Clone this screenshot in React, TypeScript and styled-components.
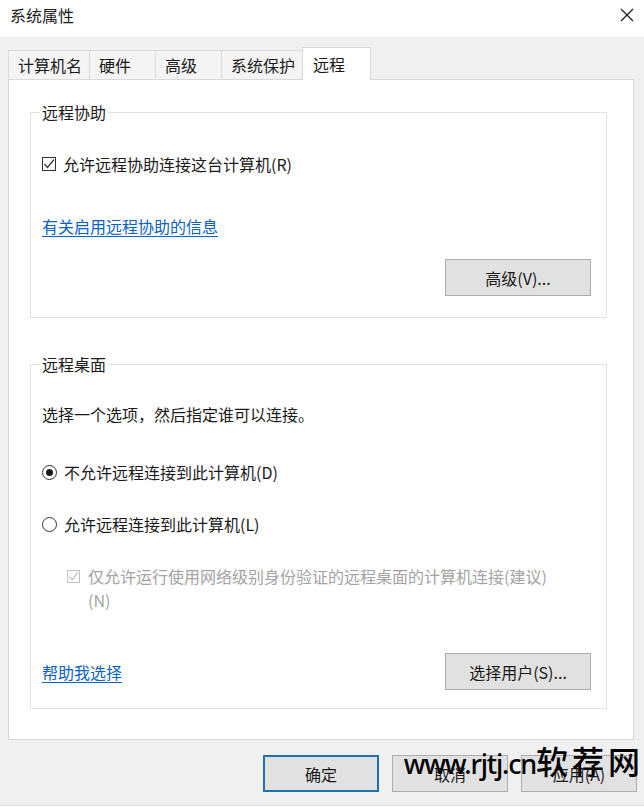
import * as React from 'react'
import styled, { createGlobalStyle } from 'styled-components'

type TabProps = { $active?: boolean }
type RowProps = { $mt: number; $indent?: number }
type ButtonProps = { $width: number; $isDefault?: boolean }

const GlobalStyle = createGlobalStyle`
    html, body {
        margin: 0;
        padding: 0;
        background: #fff;
    }
    body {
        font-family: "Noto Sans CJK SC", "Noto Sans", sans-serif;
    }
`

const Window = styled.div`
    position: relative;
    width: 644px;
    height: 806px;
    box-sizing: border-box;
    background: #f0f0f0;
    border-bottom: 1px solid #dcdcdc;
    color: #1a1a1a;
    font-size: 16px;
    line-height: 24px;
    display: flex;
    flex-direction: column;
    overflow: hidden;
`
const TitleBar = styled.header`
    height: 37px;
    flex-shrink: 0;
    box-sizing: border-box;
    padding: 0 10px 8px 10px;
    background: #fff;
    display: flex;
    align-items: center;
    justify-content: space-between;
`
const Title = styled.h1`
    margin: 0;
    font-size: 16px;
    font-weight: 400;
    line-height: 24px;
`
const CloseButton = styled.span`
    display: flex;
    width: 14px;
    height: 14px;
    margin-top: 1px;
`
const Body = styled.main`
    padding: 11px 10px 0 8px;
`
const TabStrip = styled.nav`
    position: relative;
    z-index: 1;
    display: flex;
    align-items: flex-end;
    height: 32px;
    margin-bottom: -1px;
`
const Tab = styled.div<TabProps>`
    box-sizing: border-box;
    min-width: ${p => (p.$active ? 69 : 67)}px;
    height: ${p => (p.$active ? 33 : 30)}px;
    padding: ${p => (p.$active ? '2px 10px 0' : '0 7px 0 9px')};
    margin-left: -1px;
    border: 1px solid #d9d9d9;
    border-bottom: ${p => (p.$active ? 'none' : '1px solid #d9d9d9')};
    background: ${p => (p.$active ? '#fff' : '#f4f4f4')};
    line-height: 28px;
    white-space: nowrap;

    &:first-child {
        margin-left: 0;
    }
`
const Panel = styled.section`
    background: #fff;
    border: 1px solid #d9d9d9;
    padding: 20px 26px 30px 21px;
`
const GroupBox = styled.fieldset<{ $mt?: number }>`
    margin: ${p => p.$mt ?? 0}px 0 0 0;
    padding: 0 15px 0 11px;
    border: 1px solid #e2e2e2;
    min-width: 0;
`
const Legend = styled.legend`
    padding: 0 2px;
    margin-left: -2px;
    font-size: 16px;
    line-height: 24px;
`
const GroupContent = styled.div<{ $pb: number }>`
    display: flex;
    flex-direction: column;
    align-items: flex-start;
    padding-bottom: ${p => p.$pb}px;
`
const Row = styled.div<RowProps>`
    display: flex;
    align-items: center;
    gap: 7px;
    margin-top: ${p => p.$mt}px;
    padding-left: ${p => p.$indent ?? 0}px;
`
const DisabledRow = styled(Row)`
    align-items: flex-start;
    color: #a3a3a3;
    gap: 8px;
`
const Text = styled.p<{ $mt: number }>`
    margin: ${p => p.$mt}px 0 0 0;
`
const CheckBox = styled.span<{ $disabled?: boolean }>`
    display: flex;
    flex-shrink: 0;
    box-sizing: border-box;
    width: ${p => (p.$disabled ? 13 : 14)}px;
    height: ${p => (p.$disabled ? 13 : 14)}px;
    margin-top: ${p => (p.$disabled ? 6 : 0)}px;
    border: 1px solid ${p => (p.$disabled ? '#c2c2c2' : '#333')};
    background: #fff;
`
const Radio = styled.span<{ $checked?: boolean }>`
    display: flex;
    align-items: center;
    justify-content: center;
    flex-shrink: 0;
    box-sizing: border-box;
    width: 15px;
    height: 15px;
    border: 1px solid #333;
    border-radius: 50%;
    background: #fff;

    &::after {
        content: '';
        display: ${p => (p.$checked ? 'block' : 'none')};
        width: 7px;
        height: 7px;
        border-radius: 50%;
        background: #1a1a1a;
    }
`
const Link = styled.a<{ $mt?: number }>`
    margin-top: ${p => p.$mt ?? 0}px;
    color: #0a62c4;
    text-decoration: underline;
    text-underline-offset: 3px;
    cursor: pointer;
`
const ActionRow = styled.div<{ $mt: number; $justify?: string }>`
    align-self: stretch;
    display: flex;
    align-items: center;
    justify-content: ${p => p.$justify ?? 'space-between'};
    margin-top: ${p => p.$mt}px;
`
const PushButton = styled.button<ButtonProps>`
    box-sizing: border-box;
    width: ${p => p.$width}px;
    height: 37px;
    padding: 0;
    border: ${p => (p.$isDefault ? '2px solid #1f73ad' : '1px solid #adadad')};
    background: #e1e1e1;
    color: #1a1a1a;
    font: inherit;
    line-height: 24px;
`
const Footer = styled.footer`
    position: relative;
    display: flex;
    justify-content: flex-end;
    gap: 13px;
    margin-top: 15px;
    padding-right: 7px;
`
const Watermark = styled.div`
    position: absolute;
    right: 0;
    top: -7px;
    display: flex;
    align-items: baseline;
    color: #000;
    white-space: nowrap;
    pointer-events: none;
`
const WatermarkLatin = styled.span`
    font-family: "Noto Sans", sans-serif;
    font-size: 27px;
    font-weight: 500;
    letter-spacing: -1.2px;
`
const WatermarkCjk = styled.span`
    font-family: "Noto Sans CJK SC", sans-serif;
    font-size: 32px;
    font-weight: 500;
    letter-spacing: 4px;
`

const CheckMark = ({ color }: { color: string }) => (
    <svg width="100%" height="100%" viewBox="0 0 12 12">
        <path d="M1.5 6 L4.5 9.5 L11 1.5" fill="none" stroke={color} strokeWidth="1.2" />
    </svg>
)

const CloseIcon = () => (
    <svg width="14" height="14" viewBox="0 0 14 14">
        <path d="M1 1 L13 13 M13 1 L1 13" stroke="#222" strokeWidth="1.3" fill="none" />
    </svg>
)

const tabs = ['计算机名', '硬件', '高级', '系统保护', '远程']

const App = () => (
    <>
        <GlobalStyle />
        <Window>
            <TitleBar>
                <Title>系统属性</Title>
                <CloseButton>
                    <CloseIcon />
                </CloseButton>
            </TitleBar>
            <Body>
                <TabStrip>
                    {tabs.map(t => (
                        <Tab key={t} $active={t === '远程'}>
                            {t}
                        </Tab>
                    ))}
                </TabStrip>
                <Panel>
                    <GroupBox>
                        <Legend>远程协助</Legend>
                        <GroupContent $pb={21}>
                            <Row $mt={28}>
                                <CheckBox>
                                    <CheckMark color="#333" />
                                </CheckBox>
                                允许远程协助连接这台计算机(R)
                            </Row>
                            <Link $mt={38}>有关启用远程协助的信息</Link>
                            <ActionRow $mt={21} $justify="flex-end">
                                <PushButton $width={146}>高级(V)...</PushButton>
                            </ActionRow>
                        </GroupContent>
                    </GroupBox>
                    <GroupBox $mt={34}>
                        <Legend>远程桌面</Legend>
                        <GroupContent $pb={18}>
                            <Text $mt={26}>选择一个选项，然后指定谁可以连接。</Text>
                            <Row $mt={34}>
                                <Radio $checked />
                                不允许远程连接到此计算机(D)
                            </Row>
                            <Row $mt={28}>
                                <Radio />
                                允许远程连接到此计算机(L)
                            </Row>
                            <DisabledRow $mt={28} $indent={25}>
                                <CheckBox $disabled>
                                    <CheckMark color="#b5b5b5" />
                                </CheckBox>
                                <span>
                                    仅允许运行使用网络级别身份验证的远程桌面的计算机连接(建议)
                                    <br />
                                    (N)
                                </span>
                            </DisabledRow>
                            <ActionRow $mt={41}>
                                <Link>帮助我选择</Link>
                                <PushButton $width={146}>选择用户(S)...</PushButton>
                            </ActionRow>
                        </GroupContent>
                    </GroupBox>
                </Panel>
            </Body>
            <Footer>
                <PushButton $width={116} $isDefault>确定</PushButton>
                <PushButton $width={116}>取消</PushButton>
                <PushButton $width={116}>应用(A)</PushButton>
                <Watermark>
                    <WatermarkLatin>www.rjtj.cn</WatermarkLatin>
                    <WatermarkCjk>软荐网</WatermarkCjk>
                </Watermark>
            </Footer>
        </Window>
    </>
)

export default App
